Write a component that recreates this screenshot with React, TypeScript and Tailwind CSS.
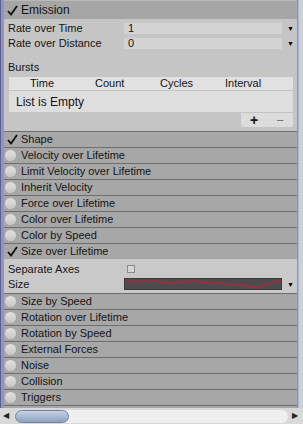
import React from "react";

const before = [
  { label: "Shape", on: true },
  { label: "Velocity over Lifetime", on: false },
  { label: "Limit Velocity over Lifetime", on: false },
  { label: "Inherit Velocity", on: false },
  { label: "Force over Lifetime", on: false },
  { label: "Color over Lifetime", on: false },
  { label: "Color by Speed", on: false },
  { label: "Size over Lifetime", on: true },
];

const after = [
  "Size by Speed",
  "Rotation over Lifetime",
  "Rotation by Speed",
  "External Forces",
  "Noise",
  "Collision",
  "Triggers",
];

function Toggle({ on }: { on: boolean }) {
  return (
    <div className="w-[17px] h-full flex items-center flex-shrink-0">
      {on ? (
        <svg width="11" height="11" viewBox="0 0 11 11" className="ml-[3px]">
          <path d="M1 6 L4 9.5 L10 1" fill="none" stroke="#111" strokeWidth="1.8" />
        </svg>
      ) : (
        <span className="w-[11px] h-[11px] rounded-full bg-gradient-to-b from-[#e2e2e2] to-[#c6c6c6] ml-[1px]" />
      )}
    </div>
  );
}

function ModuleHeader({ label, on }: { label: string; on: boolean }) {
  return (
    <div className="h-[16px] border-t border-[#6e6e6e] bg-[#a7a7a7] flex items-center flex-shrink-0">
      <Toggle on={on} />
      <span className="truncate">{label}</span>
    </div>
  );
}

function Arrow() {
  return <span className="text-[7px] leading-none text-black">▼</span>;
}

function FieldRow({ label, value }: { label: string; value: string }) {
  return (
    <div className="h-[12px] flex items-center">
      <span className="w-[120px] pl-[4px]">{label}</span>
      <div className="w-[158px] h-full bg-[#d3d3d3] border-t border-[#c7c7c7] flex items-center pl-[4px]">
        {value}
      </div>
      <div className="flex-1 flex items-center justify-center pl-[2px]">
        <Arrow />
      </div>
    </div>
  );
}

export default function App() {
  return (
    <div className="w-[303px] h-[424px] overflow-hidden flex flex-col bg-[#c2c2c2] text-[11px] leading-none text-[#141414] font-['Liberation_Sans',sans-serif]">
      <div className="h-[408px] flex flex-shrink-0">
        {/* left window edge */}
        <div className="w-[4px] flex flex-shrink-0">
          <div className="w-[1px] bg-[#5d5f90]" />
          <div className="flex-1 bg-[#9394bb]" />
        </div>

        {/* inspector */}
        <div className="w-[293px] flex flex-col overflow-hidden">
          {/* Emission */}
          <div className="h-[19px] bg-[#a6a6a6] border-t border-[#b8b8b8] flex items-center flex-shrink-0">
            <Toggle on />
            <span className="text-[12px]">Emission</span>
          </div>
          <div className="h-[112px] bg-[#c5c5c5] flex flex-col pt-[3px] flex-shrink-0">
            <FieldRow label="Rate over Time" value="1" />
            <div className="h-[3px]" />
            <FieldRow label="Rate over Distance" value="0" />
            <div className="h-[11px]" />
            <div className="h-[14px] flex items-center pl-[4px]">Bursts</div>
            <div className="h-[2px]" />
            <div className="ml-[4px] mr-[3px] flex flex-col">
              <div className="h-[15px] bg-[#e1e1e1] border border-[#c4c4c4] grid grid-cols-[65px_65px_65px_65px] pl-[21px] items-center">
                <span>Time</span>
                <span>Count</span>
                <span>Cycles</span>
                <span>Interval</span>
              </div>
              <div className="h-[22px] bg-[#dedede] border-x border-b border-[#c4c4c4] flex items-center pl-[7px] text-[12px]">
                List is Empty
              </div>
              <div className="h-[15px] flex justify-end">
                <div className="w-[54px] h-full bg-[#dcdcdc] border-x border-b border-[#c4c4c4] rounded-b-[3px] flex items-center justify-around">
                  <span className="text-[14px] font-bold leading-none">+</span>
                  <span className="text-[13px] leading-none text-[#777]">−</span>
                </div>
              </div>
            </div>
          </div>

          {before.map((m) => (
            <ModuleHeader key={m.label} label={m.label} on={m.on} />
          ))}

          {/* Size over Lifetime body */}
          <div className="h-[34px] bg-[#c9c9c9] flex flex-col pt-[3px] flex-shrink-0">
            <div className="h-[14px] flex items-center">
              <span className="w-[123px] pl-[4px]">Separate Axes</span>
              <span className="w-[8px] h-[8px] border border-[#8a8a8a] bg-[#d6d6d6]" />
            </div>
            <div className="h-[1px]" />
            <div className="h-[14px] flex items-center">
              <span className="w-[120px] pl-[4px]">Size</span>
              <div className="w-[158px] h-[12px] bg-[#4c4c4c] border border-[#3a3a3a] overflow-hidden">
                <svg width="156" height="10" viewBox="0 0 156 10">
                  <polyline
                    points="0,3 6,2 12,4 18,2 24,3 30,2 36,4 42,3 48,5 54,3 60,4 66,2 72,3 78,4 84,3 90,5 96,4 102,6 108,5 114,7 120,6 126,8 132,9 138,7 144,5 150,3 156,2"
                    fill="none"
                    stroke="#a8283e"
                    strokeWidth="1.5"
                  />
                </svg>
              </div>
              <div className="flex-1 flex items-center justify-center pl-[2px]">
                <Arrow />
              </div>
            </div>
          </div>

          {after.map((l) => (
            <ModuleHeader key={l} label={l} on={false} />
          ))}
          <div className="h-[3px] border-t border-[#6e6e6e] bg-[#a7a7a7] flex-shrink-0" />
        </div>

        {/* right window edge */}
        <div className="flex-1 flex">
          <div className="w-[1px] bg-[#7b97d0]" />
          <div className="w-[1px] bg-[#a9b8d8]" />
          <div className="flex-1 bg-[#d0d0d0]" />
        </div>
      </div>

      {/* horizontal scrollbar */}
      <div className="h-[16px] bg-[#d9d9d9] flex items-center px-[3px] gap-[4px]">
        <span className="text-[8px] leading-none text-[#222] w-[8px]">◀</span>
        <div className="flex-1 h-[13px] bg-[#efefef] rounded-full flex items-center">
          <div className="w-[54px] h-[13px] rounded-full bg-gradient-to-b from-[#c6d2e2] to-[#8ea3c0] border border-[#6f84a6]" />
        </div>
        <span className="text-[8px] leading-none text-[#222] w-[8px]">▶</span>
      </div>
    </div>
  );
}
